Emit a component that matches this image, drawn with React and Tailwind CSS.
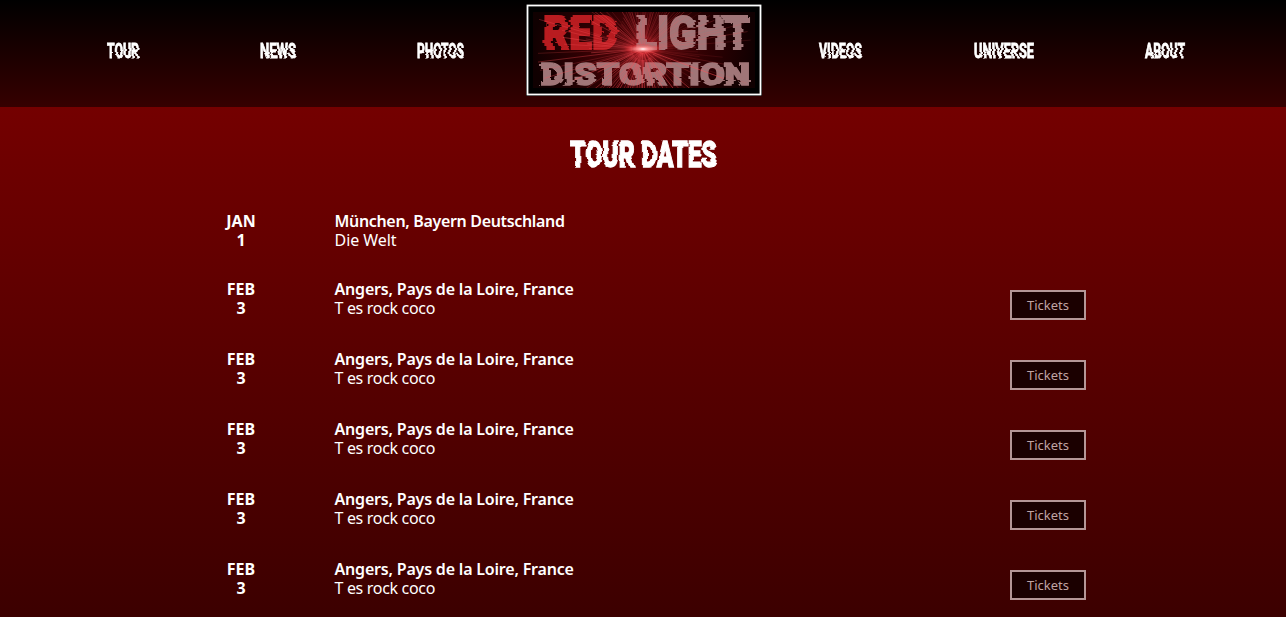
import React from "react";

const shows = [
  { month: "JAN", day: "1", place: "München, Bayern Deutschland", venue: "Die Welt" },
  ...Array.from({ length: 5 }, () => ({
    month: "FEB",
    day: "3",
    place: "Angers, Pays de la Loire, France",
    venue: "T es rock coco",
    tickets: true,
  })),
];

const rays = Array.from({ length: 130 }, (_, i) => {
  const a = (i * 137.508 * Math.PI) / 180;
  const len = 30 + ((i * 47) % 80);
  const start = 4 + ((i * 7) % 14);
  return {
    x1: 117 + Math.cos(a) * start,
    y1: 45 + Math.sin(a) * start,
    x2: 117 + Math.cos(a) * len,
    y2: 45 + Math.sin(a) * len,
    o: 0.16 + ((i * 31) % 50) / 110,
    w: 0.4 + ((i * 13) % 5) / 8,
  };
});

function GlitchFilter({ id, frequency, seed, scale }) {
  return (
    <filter id={id} x="-10%" y="-20%" width="120%" height="140%" colorInterpolationFilters="sRGB">
      <feTurbulence type="fractalNoise" baseFrequency={frequency} numOctaves="1" seed={seed} />
      <feComponentTransfer>
        <feFuncR type="discrete" tableValues="0.1 0.1 0.3 0.5 0.5 0.7 0.9 0.9" />
      </feComponentTransfer>
      <feColorMatrix values="1 0 0 0 0  0 0 0 0 0.5  0 0 0 0 0.5  0 0 0 0 1" result="n" />
      <feDisplacementMap in="SourceGraphic" in2="n" scale={scale} xChannelSelector="R" yChannelSelector="G" />
    </filter>
  );
}

function GlitchFilters() {
  return (
    <svg className="absolute h-0 w-0" aria-hidden="true">
      <defs>
        <GlitchFilter id="glitch-nav" frequency="0.03 0.24" seed="4" scale="3.6" />
        <GlitchFilter id="glitch-title" frequency="0.03 0.17" seed="12" scale="5.5" />
        <GlitchFilter id="glitch-logo" frequency="0.022 0.2" seed="12" scale="9" />
      </defs>
    </svg>
  );
}

function NavLink({ label, width, className }) {
  return (
    <a href="#" className={className}>
      <svg width={width} height="24" className="block overflow-visible">
        <text
          x="0" y="19" textLength={width} lengthAdjust="spacingAndGlyphs" filter="url(#glitch-nav)"
          className="fill-white stroke-white stroke-[0.9px] font-['Roboto',sans-serif] text-[21px] font-bold"
        >
          {label}
        </text>
      </svg>
    </a>
  );
}

function Logo() {
  return (
    <a href="#" className="ml-[62px] mt-1">
      <svg width="236" height="92" viewBox="0 0 236 92" className="block overflow-visible">
        <defs>
          <radialGradient id="halo" gradientUnits="userSpaceOnUse" cx="117" cy="45" r="112" gradientTransform="translate(0 16) scale(1 .65)">
            <stop offset="0" stopColor="#d02028" stopOpacity="0.9" />
            <stop offset="0.2" stopColor="#64060a" stopOpacity="0.8" />
            <stop offset="0.6" stopColor="#3c0003" stopOpacity="0.75" />
            <stop offset="1" stopColor="#140001" stopOpacity="0.8" />
          </radialGradient>
          <radialGradient id="core">
            <stop offset="0" stopColor="#fff" />
            <stop offset="0.35" stopColor="#ffb0b0" stopOpacity="0.8" />
            <stop offset="1" stopColor="#ff2020" stopOpacity="0" />
          </radialGradient>
          <clipPath id="art"><rect x="12" y="8" width="222" height="76" /></clipPath>
        </defs>
        <rect width="236" height="92" fill="#000" />
        <rect x="1.5" y="1.5" width="233" height="89" fill="#000" stroke="#fff" strokeWidth="1.8" />
        <rect x="7" y="8" width="222" height="76" fill="url(#halo)" />
        <g className="font-['Roboto',sans-serif] font-black" filter="url(#glitch-logo)">
          <text x="17" y="44.5" fontSize="47" textLength="75" lengthAdjust="spacingAndGlyphs" fill="#b81c20" stroke="#b81c20" strokeWidth="1.8">RED</text>
          <text x="109" y="44.5" fontSize="47" textLength="115" lengthAdjust="spacingAndGlyphs" fill="#a07678" stroke="#a07678" strokeWidth="1.8">LIGHT</text>
          <text x="14" y="81" fontSize="32" textLength="210" lengthAdjust="spacingAndGlyphs" fill="#a07678" stroke="#a07678" strokeWidth="1.6">DISTORTION</text>
        </g>
        <g clipPath="url(#art)">
          {rays.map((r, i) => (
            <line key={i} x1={r.x1} y1={r.y1} x2={r.x2} y2={r.y2} stroke="#ff5058" strokeOpacity={r.o} strokeWidth={r.w} />
          ))}
          <ellipse cx="117" cy="45" rx="19" ry="5" fill="url(#core)" />
          <ellipse cx="117" cy="45" rx="9" ry="3" fill="url(#core)" />
        </g>
      </svg>
    </a>
  );
}

export default function App() {
  return (
    <div className="h-[617px] overflow-hidden bg-[#3c0000] font-['Noto_Sans',sans-serif] text-white">
      <GlitchFilters />
      <header className="h-[107px] bg-linear-to-b/srgb from-black to-[#360000]">
        <nav className="flex items-start pl-[107px]">
          <NavLink label="TOUR" width={32} className="mt-[39px]" />
          <NavLink label="NEWS" width={36} className="mt-[39px] ml-[121px]" />
          <NavLink label="PHOTOS" width={47} className="mt-[39px] ml-[121px]" />
          <Logo />
          <NavLink label="VIDEOS" width={43} className="mt-[39px] ml-[57px]" />
          <NavLink label="UNIVERSE" width={60} className="mt-[39px] ml-[112px]" />
          <NavLink label="ABOUT" width={40} className="mt-[39px] ml-[111px]" />
        </nav>
      </header>
      <main className="h-[510px] bg-linear-to-b/srgb from-[#740000] to-[#3c0000] pt-7">
        <h1 className="flex justify-center">
          <svg width="148" height="44" className="block overflow-visible">
            <text
              x="1" y="32" textLength="147" lengthAdjust="spacingAndGlyphs" filter="url(#glitch-title)"
              className="fill-white stroke-white stroke-[1.3px] font-['Roboto',sans-serif] text-[37.5px] font-black"
            >
              TOUR DATES
            </text>
          </svg>
        </h1>
        <ul className="mt-[33px] w-[1086px] pl-[201px]">
          {shows.map((show, i) => (
            <li key={i} className="group flex h-[70px] items-start text-base leading-[19px] first:h-[68px]">
              <div className="w-20 text-center font-bold">
                <div>{show.month}</div>
                <div>{show.day}</div>
              </div>
              <div className="ml-[53.5px] flex-1">
                <div className="font-semibold tracking-[-0.19px] group-first:tracking-[-0.33px]">{show.place}</div>
                <div className="tracking-[-0.32px] group-first:tracking-[-0.05px]">{show.venue}</div>
              </div>
              {show.tickets && (
                <button className="mt-[10px] h-[30px] w-[76px] border-2 border-[#b59696] bg-[#1b0000] text-[13px] leading-none text-[#c0a4a4]">
                  Tickets
                </button>
              )}
            </li>
          ))}
        </ul>
      </main>
    </div>
  );
}
